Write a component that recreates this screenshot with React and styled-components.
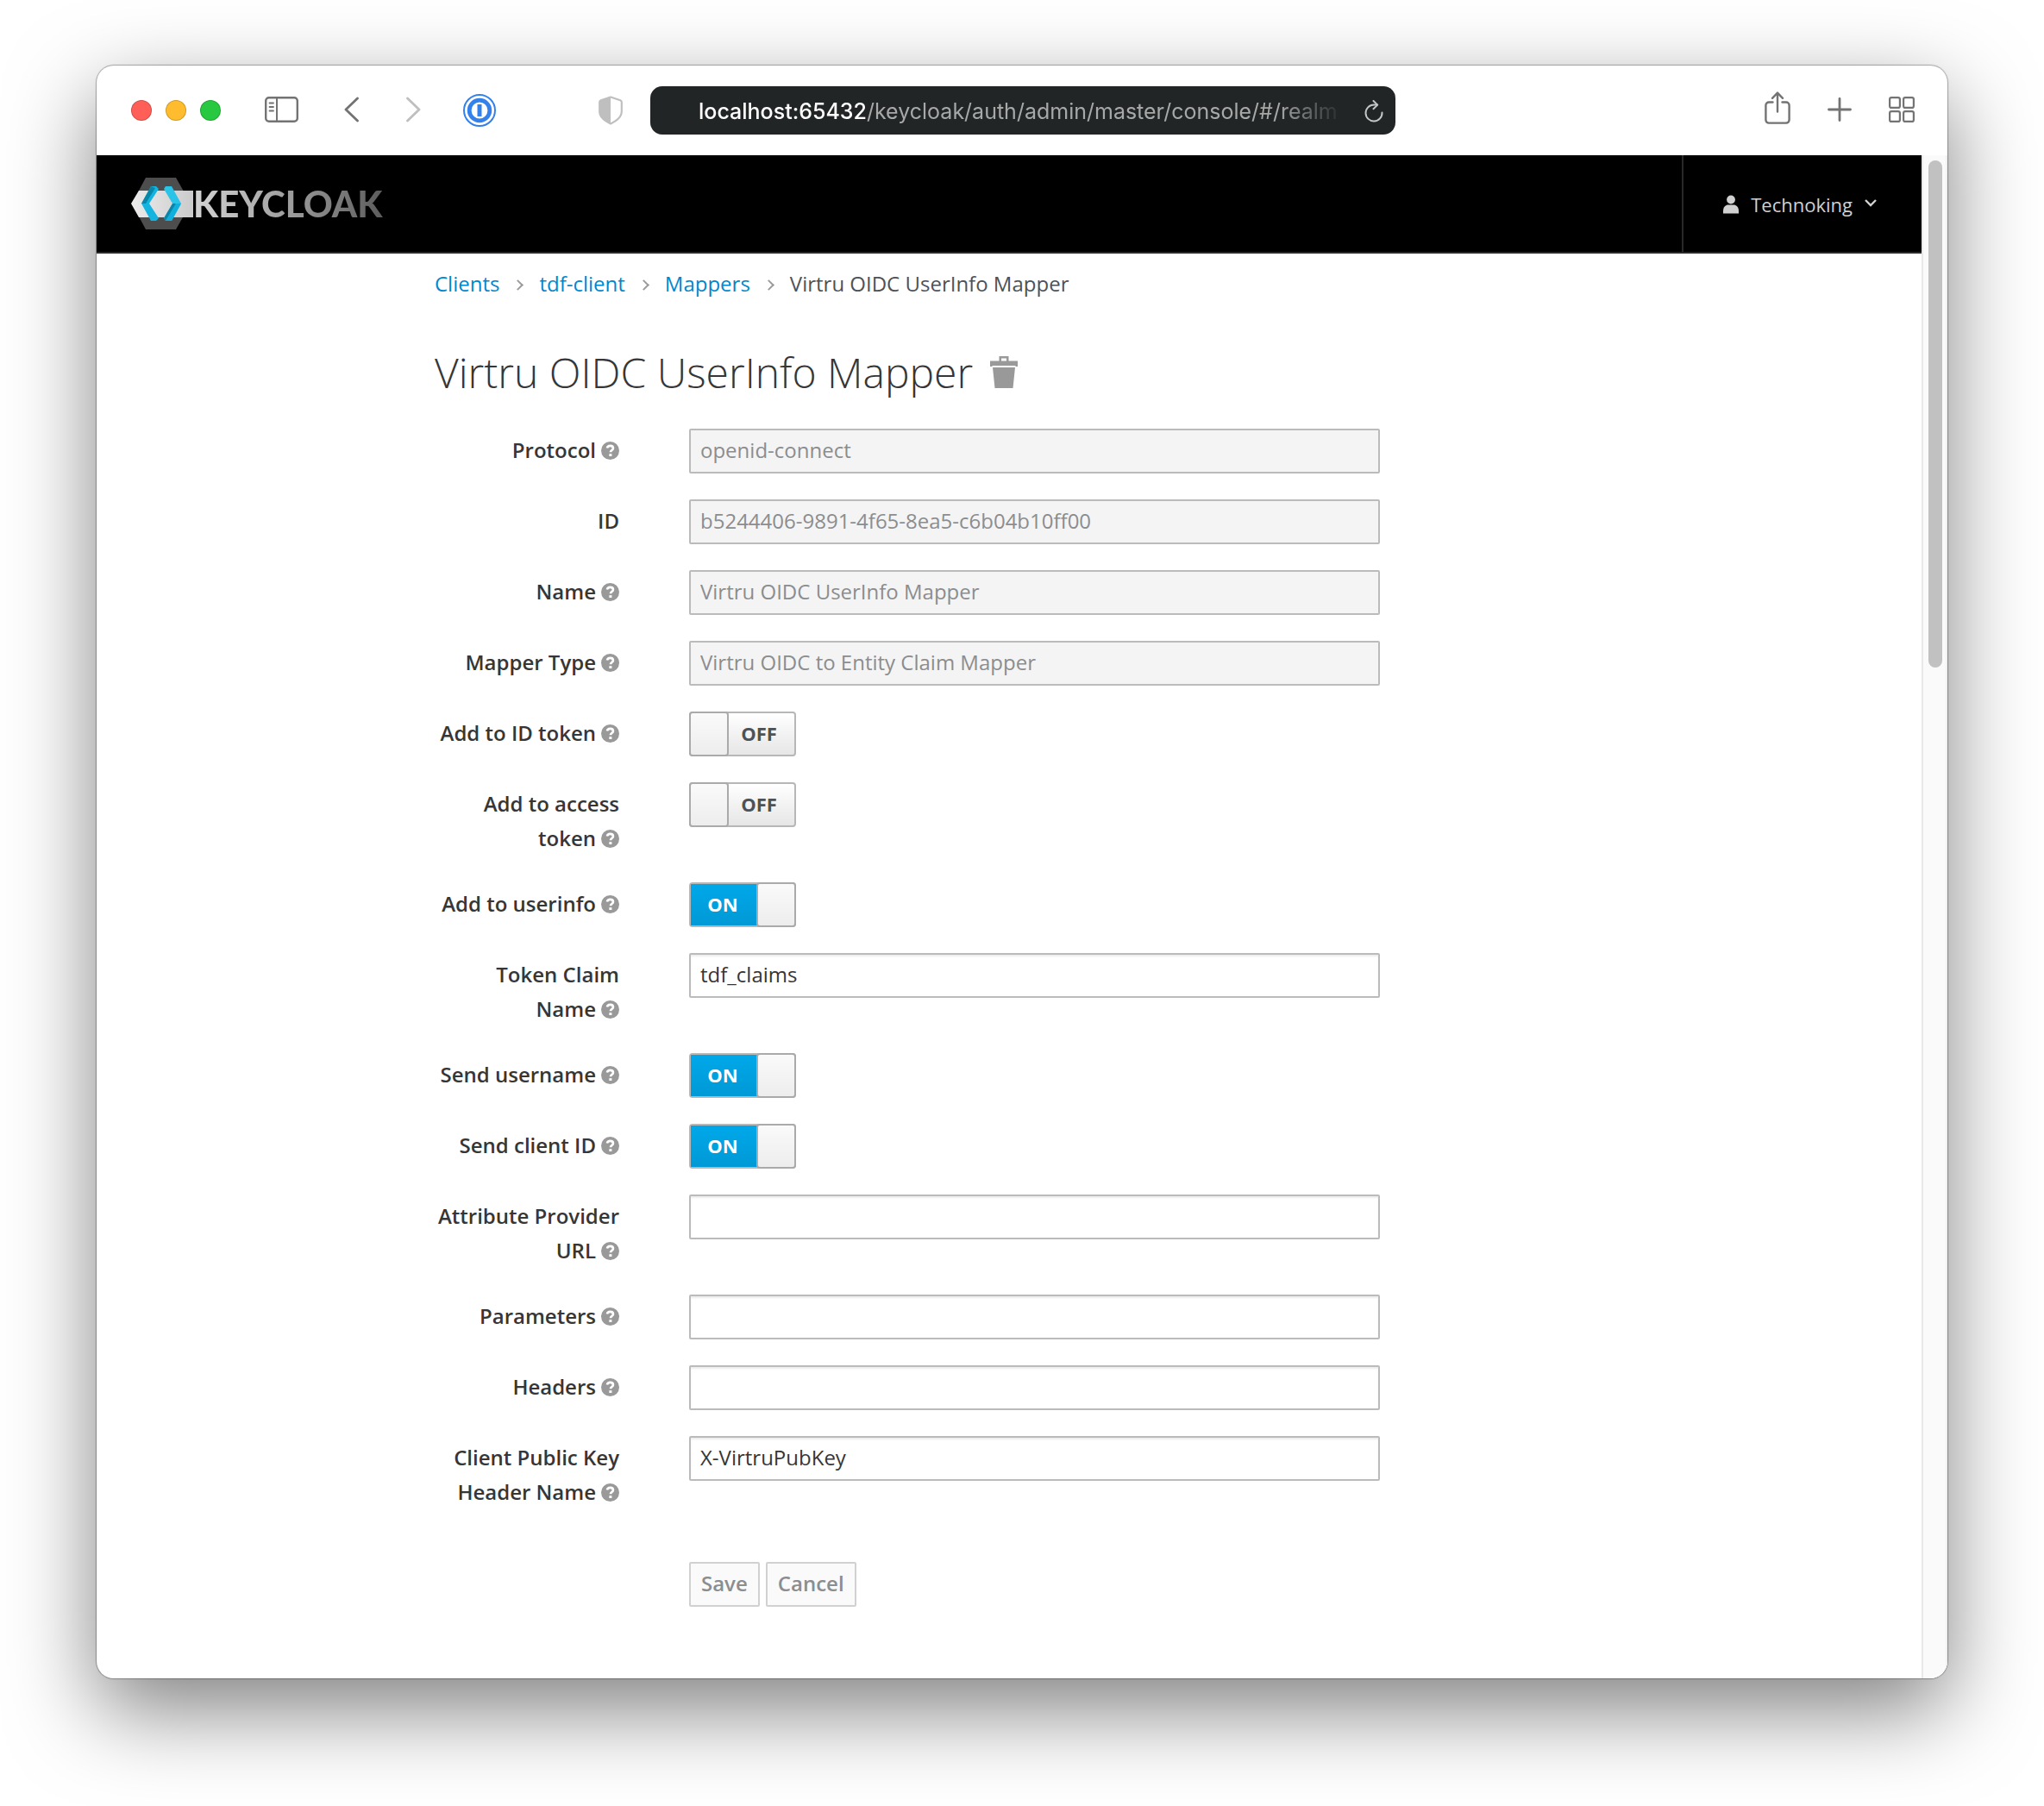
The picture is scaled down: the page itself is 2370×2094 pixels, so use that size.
import React, { useState } from "react";
import styled, { createGlobalStyle, css } from "styled-components";

const sans = '"Open Sans", "Noto Sans", sans-serif';

const GlobalStyle = createGlobalStyle`
  *, *::before, *::after { box-sizing: border-box; }
  body { margin: 0; background: #fff; color: #363636; font: 24px/40px ${sans}; }
  button { margin: 0; padding: 0; border: 0; background: none; color: inherit; font: inherit; }
  svg { display: block; flex: none; }
`;

const Desktop = styled.div`
  display: flex;
  min-height: 100vh;
  padding: 76px 112px 148px;
`;

const BrowserWindow = styled.div`
  flex: 1;
  min-width: 0;
  display: flex;
  flex-direction: column;
  overflow: hidden;
  border-radius: 20px;
  background: #fff;
  box-shadow: 0 0 1px 1px rgba(0, 0, 0, 0.3), 0 36px 100px rgba(0, 0, 0, 0.5);
`;

const Toolbar = styled.div`
  display: flex;
  align-items: center;
  justify-content: space-between;
  height: 104px;
  padding: 0 38px 0 40px;
  color: #737373;
`;

const ToolGroup = styled.div`
  display: flex;
  align-items: center;
  gap: ${(p) => p.$gap}px;
  padding-bottom: 2px;
`;

const Lights = styled.div`
  display: flex;
  gap: 16px;
  margin-right: 51px;
`;

const Light = styled.button`
  width: 24px;
  height: 24px;
  border: 1px solid rgba(0, 0, 0, 0.18);
  border-radius: 50%;
  background: ${(p) => p.$color};
`;

const ToolButton = styled.button`
  display: flex;
  color: ${(p) => (p.$faint ? "#bfbfbf" : "inherit")};
`;

const AddressGroup = styled.div`
  display: flex;
  align-items: center;
  gap: 32px;
  margin: 0 auto 0 119px;
`;

const AddressBar = styled.div`
  display: flex;
  align-items: center;
  gap: 24px;
  width: 864px;
  height: 56px;
  padding: 2px 14px 0 56px;
  border-radius: 14px;
  background: #222526;
  color: #fff;
`;

const AddressText = styled.button`
  flex: 1;
  min-width: 0;
  text-align: left;
  white-space: nowrap;
  font: 500 25px/40px Inter, sans-serif;
  mask-image: linear-gradient(to left, transparent, #000 76px);
`;

const AddressPath = styled.span`
  color: #a7a8a8;
  font-weight: 400;
`;

const Viewport = styled.div`
  flex: 1;
  display: flex;
`;

const Page = styled.div`
  flex: 1;
  min-width: 0;
`;

const ScrollTrack = styled.div`
  width: 30px;
  padding: 6px;
  border-left: 2px solid #e8e8e8;
  border-right: 2px solid #f1f1f1;
  background: #fafafa;
`;

const ScrollThumb = styled.div`
  width: 16px;
  height: 588px;
  border-radius: 8px;
  background: #c1c1c1;
`;

const Masthead = styled.header`
  display: flex;
  align-items: stretch;
  justify-content: space-between;
  height: 114px;
  padding-left: 40px;
  border-bottom: 2px solid #292929;
  background: #000;
`;

const Brand = styled.a`
  display: flex;
  align-items: center;
  text-decoration: none;
`;

const Wordmark = styled.span`
  font: 900 42px/60px Lato, sans-serif;
  color: transparent;
  background: linear-gradient(to right, #d4d4d4, #a4a4a4 45%, #5c5c5c);
  background-clip: text;
  -webkit-background-clip: text;
`;

const UserMenu = styled.button`
  display: flex;
  align-items: center;
  gap: 14px;
  padding: 2px 52px 0 46px;
  border-left: 2px solid #292929;
  color: #d1d1d1;
  font-size: 22px;
`;

const Main = styled.main`
  padding: 0 40px 60px 392px;
`;

const Breadcrumb = styled.ol`
  display: flex;
  align-items: center;
  margin: 0;
  padding: 15px 0;
  list-style: none;
`;

const Crumb = styled.li`
  display: flex;
  align-items: center;
  color: #4d5258;
  & + &::before {
    content: "";
    width: 9px;
    height: 9px;
    margin: 2px 20px 0 17px;
    border: solid #9c9c9c;
    border-width: 2px 2px 0 0;
    transform: rotate(45deg);
  }
  a { color: #0088ce; text-decoration: none; }
`;

const TitleRow = styled.div`
  display: flex;
  align-items: center;
  gap: 20px;
  margin: 35px 0 32px;
  color: #999;
`;

const Title = styled.h1`
  margin: 0;
  color: #363636;
  font-size: 48px;
  font-weight: 300;
  line-height: 66px;
`;

const Form = styled.form`
  display: flex;
  flex-direction: column;
  gap: 30px;
`;

const Row = styled.div`
  display: grid;
  grid-template-columns: 214px minmax(0, 801px);
  column-gap: 81px;
  align-items: start;
`;

const Label = styled.label`
  padding: 5px 0 1px;
  text-align: right;
  font-weight: 600;
`;

const HelpMark = styled.span`
  display: inline-block;
  margin-left: 6px;
  vertical-align: -2px;
  color: #999;
`;

const TextInput = styled.input`
  width: 100%;
  height: 52px;
  padding: 0 11px 3px;
  border: 2px solid #bbb;
  border-radius: 2px;
  background: #fff;
  box-shadow: inset 0 2px 2px rgba(3, 3, 3, 0.075);
  color: #363636;
  font: 24px/40px ${sans};
  outline: none;
  &:disabled {
    background: #f4f4f4;
    box-shadow: none;
    color: #8b8d8f;
  }
`;

const SwitchBox = styled.span`
  position: relative;
  display: flex;
  align-items: stretch;
  flex-direction: ${(p) => (p.$on ? "row" : "row-reverse")};
  width: 124px;
  height: 52px;
  border: 2px solid #b7b7b7;
  border-radius: 4px;
  background: linear-gradient(#fff, #e6e6e6);
`;

const SwitchInput = styled.input`
  position: absolute;
  inset: 0;
  width: 100%;
  height: 100%;
  margin: 0;
  opacity: 0;
`;

const SwitchText = styled.span`
  flex: 1;
  padding-right: 4px;
  text-align: center;
  font-size: 22px;
  font-weight: 700;
  line-height: 46px;
  color: #4d5258;
  ${(p) =>
    p.$on &&
    css`
      color: #fff;
      background: linear-gradient(#00a8e9, #0099d6);
    `}
`;

const SwitchKnob = styled.span`
  width: 46px;
  margin: -2px;
  border: 2px solid #aaa;
  border-radius: 4px;
  background: linear-gradient(#fafafa, #ededed);
`;

const Actions = styled.div`
  display: flex;
  gap: 7px;
  margin-top: 30px;
  padding-left: 295px;
`;

const ActionButton = styled.button`
  height: 52px;
  padding: 0 12px 2px;
  border: 2px solid #d1d1d1;
  border-radius: 2px;
  background: #fafafa;
  color: #8b8d8f;
  font-weight: 600;
`;

const NavButtons = styled.div`
  display: flex;
  gap: 55px;
  margin: 0 49px 0 53px;
`;

const SidebarIcon = () => (
  <svg width="39" height="30" viewBox="0 0 39 30" fill="none" stroke="currentColor" strokeWidth="2.4">
    <rect x="1.2" y="1.2" width="36.6" height="27.6" rx="3.6" />
    <path d="M14 1.5V28.5" strokeWidth="2" />
    <path d="M5.5 7.5H10M5.5 12H10M5.5 16.500H10" strokeWidth="1.8" strokeLinecap="round" />
  </svg>
);

const BackIcon = () => (
  <svg width="17" height="30" viewBox="0 0 17 30" fill="none" stroke="currentColor" strokeWidth="2.8" strokeLinecap="round" strokeLinejoin="round">
    <path d="M15.5 2 2 15 15.5 28" />
  </svg>
);

const ForwardIcon = () => (
  <svg width="17" height="30" viewBox="0 0 17 30" fill="none" stroke="currentColor" strokeWidth="2.8" strokeLinecap="round" strokeLinejoin="round">
    <path d="M1.5 2 15 15 1.5 28" />
  </svg>
);

const PasswordIcon = () => (
  <svg width="38" height="38" viewBox="0 0 38 38" fill="none" stroke="#3581ec">
    <circle cx="19" cy="19" r="18" strokeWidth="2" />
    <circle cx="19" cy="19" r="11.8" strokeWidth="4.8" />
    <path d="M19 12v14" strokeWidth="5" />
  </svg>
);

const ShieldIcon = () => (
  <svg width="28" height="34" viewBox="0 0 28 34" fill="none">
    <path d="M14 1.5 2.8 5.2Q1.2 5.9 1.2 7.6V18c0 7 5.8 10.8 12.8 14.5C21 28.8 26.8 25 26.8 18V7.6q0-1.7-1.6-2.4Z" stroke="#bfbfbf" strokeWidth="2.2" strokeLinejoin="round" />
    <path d="M14 1 2.5 5Q1 5.8 1 7.6V18c0 7 6 11 13 15Z" fill="#bfbfbf" />
  </svg>
);

const ReloadIcon = () => (
  <svg width="22" height="26" viewBox="0 0 22 26" fill="none" stroke="#c4c5c5" strokeWidth="2" strokeLinecap="round" strokeLinejoin="round">
    <path d="M20.500 14.500A9.500 9.500 0 1 1 11 5.500h4" />
    <path d="M10.500 1 15.200 5.600 10.500 10.200" />
  </svg>
);

const ShareIcon = () => (
  <svg width="30" height="42" viewBox="0 0 30 42" fill="none" stroke="currentColor" strokeWidth="2.4" strokeLinecap="round" strokeLinejoin="round">
    <path d="M9.5 12.500H5a3.600 3.600 0 0 0-3.600 3.600V33A3.600 3.600 0 0 0 5 36.600h20a3.600 3.600 0 0 0 3.600-3.600V16.100a3.600 3.600 0 0 0-3.600-3.600h-4.500" />
    <path d="M15 23.500V1.800M9 7.800 15 1.600l6 6.200" />
  </svg>
);

const PlusIcon = () => (
  <svg width="28" height="28" viewBox="0 0 28 28" stroke="currentColor" strokeWidth="2.8" strokeLinecap="round">
    <path d="M14 1.5v25M1.5 14h25" />
  </svg>
);

const TabsIcon = () => (
  <svg width="30" height="30" viewBox="0 0 30 30" fill="none" stroke="currentColor" strokeWidth="2.2">
    <rect x="1.1" y="1.1" width="11.8" height="11.8" rx="2" />
    <rect x="17.1" y="1.1" width="11.8" height="11.8" rx="2" />
    <rect x="1.1" y="17.1" width="11.8" height="11.8" rx="2" />
    <rect x="17.1" y="17.1" width="11.8" height="11.8" rx="2" />
  </svg>
);

const BrandMark = () => (
  <svg width="72" height="60" viewBox="0 0 72 60">
    <defs>
      <linearGradient id="band" x1="0" x2="1">
        <stop offset="0" stopColor="#ececec" />
        <stop offset="1" stopColor="#cbcbcb" />
      </linearGradient>
    </defs>
    <path d="M17 0H52L69 30 52 60H17L1 30Z" fill="#4d4d4d" />
    <path d="M9 15H72V46H9L0 30Z" fill="url(#band)" />
    <path d="M23 10H29L32 13 21 30 32 47 29 50H23L12 30Z" fill="#14b4e0" />
    <path d="M23 10 12 30H17L28 12Z" fill="#0a86a8" />
    <path d="M40 10H47L58 30 47 50H40L38 47 48 30 38 13Z" fill="#2cc3e8" />
    <path d="M52 30H58L47 50H40Z" fill="#0fb0dd" />
    <path d="M48 30H52L40 50 38 47Z" fill="#0a86a8" />
  </svg>
);

const UserIcon = () => (
  <svg width="18" height="22" viewBox="0 0 18 22" fill="currentColor">
    <circle cx="9" cy="5.5" r="4.9" />
    <path d="M0 21.5v-3C0 14 3 11.500 6 11.500h6c3 0 6 2.500 6 7v3Z" />
  </svg>
);

const CaretIcon = () => (
  <svg width="14" height="14" viewBox="0 0 14 14" fill="none" stroke="currentColor" strokeWidth="2.4">
    <path d="M1 2 7 8l6-6" />
  </svg>
);

const TrashIcon = () => (
  <svg width="32" height="38" viewBox="0 0 32 38" fill="currentColor">
    <path d="M10.500 0H21.500V5.500H32V12H29.500V11H2.500V12H0V5.500H10.500ZM13 2.500V5.500H19V2.500Z" fillRule="evenodd" />
    <path d="M3 13H29L26.500 37H5.500Z" />
  </svg>
);

const HelpIcon = () => (
  <svg width="21" height="21" viewBox="0 0 20 20" fill="none" role="img" aria-label="Help">
    <circle cx="10" cy="10" r="10" fill="currentColor" />
    <path d="M6.6 7.2C7 5.4 8.300 4.600 10 4.600c2 0 3.300 1.100 3.300 2.700 0 2.200-2.900 2.200-2.900 4.300" stroke="#fff" strokeWidth="2.500" />
    <rect x="8.900" y="13.500" width="2.900" height="2.700" fill="#fff" />
  </svg>
);

const fields = [
  { id: "protocol", label: ["Protocol"], help: true, value: "openid-connect", disabled: true },
  { id: "mapper-id", label: ["ID"], value: "b5244406-9891-4f65-8ea5-c6b04b10ff00", disabled: true },
  { id: "name", label: ["Name"], help: true, value: "Virtru OIDC UserInfo Mapper", disabled: true },
  { id: "mapper-type", label: ["Mapper Type"], help: true, value: "Virtru OIDC to Entity Claim Mapper", disabled: true },
  { id: "id-token", label: ["Add to ID token"], help: true, on: false },
  { id: "access-token", label: ["Add to access", "token"], help: true, on: false },
  { id: "userinfo", label: ["Add to userinfo"], help: true, on: true },
  { id: "claim-name", label: ["Token Claim", "Name"], help: true, value: "tdf_claims" },
  { id: "send-username", label: ["Send username"], help: true, on: true },
  { id: "send-client", label: ["Send client ID"], help: true, on: true },
  { id: "provider-url", label: ["Attribute Provider", "URL"], help: true, value: "" },
  { id: "parameters", label: ["Parameters"], help: true, value: "" },
  { id: "headers", label: ["Headers"], help: true, value: "" },
  { id: "key-header", label: ["Client Public Key", "Header Name"], help: true, value: "X-VirtruPubKey" },
];

function Toggle({ id, initial }) {
  const [on, setOn] = useState(initial);
  return (
    <SwitchBox $on={on}>
      <SwitchText $on={on}>{on ? "ON" : "OFF"}</SwitchText>
      <SwitchKnob />
      <SwitchInput id={id} type="checkbox" checked={on} onChange={() => setOn(!on)} />
    </SwitchBox>
  );
}

function Field({ id, label, help, value, disabled, on }) {
  return (
    <Row>
      <Label htmlFor={id}>
        {label.map((line, i) => (
          <React.Fragment key={line}>
            {i > 0 && <br />}
            {line}
          </React.Fragment>
        ))}
        {help && (
          <HelpMark>
            <HelpIcon />
          </HelpMark>
        )}
      </Label>
      {on === undefined ? (
        <TextInput id={id} type="text" defaultValue={value} disabled={disabled} />
      ) : (
        <Toggle id={id} initial={on} />
      )}
    </Row>
  );
}

export default function App() {
  return (
    <>
      <GlobalStyle />
      <Desktop>
        <BrowserWindow>
          <Toolbar>
            <Lights>
              <Light $color="#ff5f57" aria-label="Close" />
              <Light $color="#febc2e" aria-label="Minimize" />
              <Light $color="#28c840" aria-label="Zoom" />
            </Lights>
            <ToolGroup $gap={0}>
              <ToolButton aria-label="Show sidebar"><SidebarIcon /></ToolButton>
              <NavButtons>
                <ToolButton aria-label="Back"><BackIcon /></ToolButton>
                <ToolButton aria-label="Forward" $faint><ForwardIcon /></ToolButton>
              </NavButtons>
            </ToolGroup>
            <ToolButton aria-label="Passwords"><PasswordIcon /></ToolButton>
            <AddressGroup>
              <ToolButton aria-label="Privacy report"><ShieldIcon /></ToolButton>
              <AddressBar>
                <AddressText>
                  localhost:65432<AddressPath>/keycloak/auth/admin/master/console/#/realm</AddressPath>
                </AddressText>
                <ToolButton aria-label="Reload"><ReloadIcon /></ToolButton>
              </AddressBar>
            </AddressGroup>
            <ToolGroup $gap={43}>
              <ToolButton aria-label="Share"><ShareIcon /></ToolButton>
              <ToolButton aria-label="New tab"><PlusIcon /></ToolButton>
              <ToolButton aria-label="Tab overview"><TabsIcon /></ToolButton>
            </ToolGroup>
          </Toolbar>
          <Viewport>
            <Page>
              <Masthead>
                <Brand href="#/">
                  <BrandMark />
                  <Wordmark>KEYCLOAK</Wordmark>
                </Brand>
                <UserMenu>
                  <UserIcon />
                  Technoking
                  <CaretIcon />
                </UserMenu>
              </Masthead>
              <Main>
                <nav aria-label="Breadcrumb">
                  <Breadcrumb>
                    <Crumb><a href="#/clients">Clients</a></Crumb>
                    <Crumb><a href="#/clients/tdf-client">tdf-client</a></Crumb>
                    <Crumb><a href="#/clients/tdf-client/mappers">Mappers</a></Crumb>
                    <Crumb>Virtru OIDC UserInfo Mapper</Crumb>
                  </Breadcrumb>
                </nav>
                <TitleRow>
                  <Title>Virtru OIDC UserInfo Mapper</Title>
                  <ToolButton aria-label="Delete mapper"><TrashIcon /></ToolButton>
                </TitleRow>
                <Form onSubmit={(e) => e.preventDefault()}>
                  {fields.map((f) => <Field key={f.id} {...f} />)}
                  <Actions>
                    <ActionButton type="submit" disabled>Save</ActionButton>
                    <ActionButton type="button" disabled>Cancel</ActionButton>
                  </Actions>
                </Form>
              </Main>
            </Page>
            <ScrollTrack><ScrollThumb /></ScrollTrack>
          </Viewport>
        </BrowserWindow>
      </Desktop>
    </>
  );
}
